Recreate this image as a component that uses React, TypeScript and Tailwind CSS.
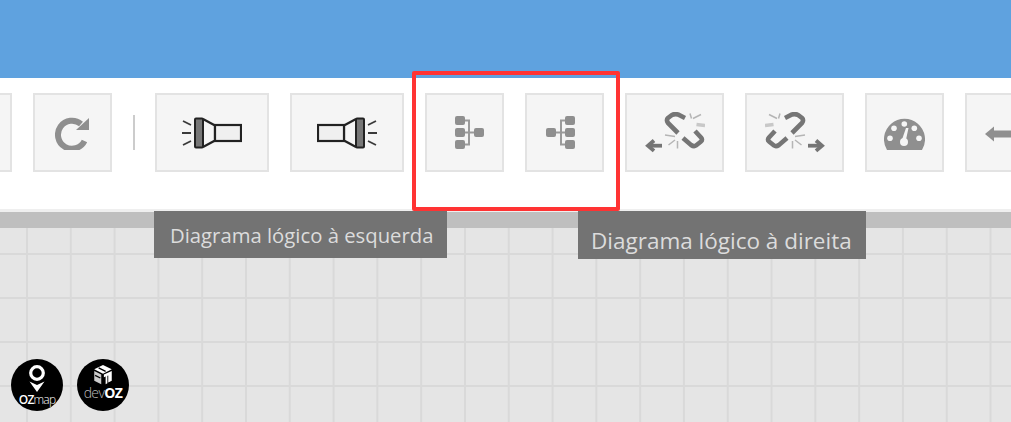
import React from 'react';

function ToolButton({ width, children }: { width: string; children?: React.ReactNode }) {
  return (
    <div className={`${width} h-[79px] shrink-0 flex items-center justify-center border-2 border-[#e3e3e3] bg-[#f5f5f5]`}>
      {children}
    </div>
  );
}

function Flashlight({ flip }: { flip?: boolean }) {
  return (
    <svg width="60" height="32" viewBox="0 0 60 32" fill="none" className="blur-[0.4px]">
      <g transform={flip ? 'translate(60 0) scale(-1 1)' : undefined}>
        <path d="M1 4l8 4M0 16h9M1 28l8-4" stroke="#3a3a3a" strokeWidth="1.8" />
        <rect x="13" y="1.500" width="8" height="29" rx="1" fill="#777" stroke="#222" strokeWidth="2" />
        <path d="M21 2l12 6.500v15L21 30" stroke="#222" strokeWidth="2.200" />
        <rect x="33" y="8" width="26" height="16" fill="#f0f0f0" stroke="#222" strokeWidth="2.200" />
      </g>
    </svg>
  );
}

function TreeIcon({ flip }: { flip?: boolean }) {
  return (
    <svg width="29" height="33" viewBox="0 0 29 33" fill="none" className={flip ? 'mr-[8px]' : 'ml-[10px]'}>
      <g transform={flip ? 'translate(29 0) scale(-1 1)' : undefined}>
        <path d="M8 4.500h6v24H8M8 16.500h12" stroke="#9a9a9a" strokeWidth="2" />
        <rect x="0" y="0" width="10" height="9" rx="2" fill="#8f8f8f" />
        <rect x="0" y="12" width="10" height="9" rx="2" fill="#8f8f8f" />
        <rect x="0" y="24" width="10" height="9" rx="2" fill="#8f8f8f" />
        <rect x="19" y="12" width="10" height="9" rx="2" fill="#8f8f8f" />
      </g>
    </svg>
  );
}

function BrokenLink({ flip }: { flip?: boolean }) {
  return (
    <svg width="60" height="41" viewBox="0 0 60 41" fill="none" className="blur-[0.5px]">
      <g transform={flip ? 'translate(60 0) scale(-1 1)' : undefined}>
        <path d="M40 6l-7-3.500q-3-1-6 .500l-4 3q-2 2 0 5l10 10" stroke="#757575" strokeWidth="4.600" />
        <path d="M38 26l8 7q3 2 5 .500l5-4q2-1.500 0-4l-6-6.500" stroke="#757575" strokeWidth="4.600" />
        <path d="M48 6.500l8-4M45 1.500l1.500 5M20 23l10 1.500M23.500 33l6.500-5M32.500 36.500V29" stroke="#b5b5b5" strokeWidth="1.500" />
        <path d="M51.500 12.500l8.500 1" stroke="#c8c8c8" strokeWidth="3.500" />
        <path d="M5 33.700h12" stroke="#757575" strokeWidth="3.800" />
        <path d="M9 28.500l-6 5.200 6 5.200" stroke="#757575" strokeWidth="3.800" />
      </g>
    </svg>
  );
}

function Gauge() {
  return (
    <svg width="41" height="32" viewBox="0 0 41 32" className="mt-[3px]">
      <path d="M3 32A20.500 20.500 0 1 1 38 32Z" fill="#8f8f8f" />
      <g fill="#f5f5f5">
        <circle cx="20.300" cy="6" r="2.800" />
        <circle cx="10" cy="10.300" r="2.800" />
        <circle cx="30.300" cy="10.300" r="2.800" />
        <circle cx="6" cy="20.300" r="2.800" />
        <circle cx="35" cy="20.300" r="2.800" />
        <circle cx="20" cy="24" r="4" />
        <path d="M17.500 23l4.500-13h2.500l-3 14z" />
      </g>
    </svg>
  );
}

function LogoBadge({ children }: { children: React.ReactNode }) {
  return (
    <div className="w-[52px] h-[52px] rounded-full bg-black text-white flex flex-col items-center justify-end font-['Open_Sans',sans-serif]">
      {children}
    </div>
  );
}

export default function App() {
  return (
    <div className="relative w-[1011px] h-[422px] overflow-hidden flex flex-col bg-white">
      <div className="h-[78px] shrink-0 bg-[#5fa2df]" />

      {/* Toolbar */}
      <div className="h-[134px] shrink-0 border-b-[3px] border-[#efefef] pt-[15px] overflow-hidden">
        <div className="flex items-start gap-[21px] ml-[-67px]">
          <ToolButton width="w-[79px]" />
          <ToolButton width="w-[79px]">
            <svg width="35" height="35" viewBox="0 0 35 35" fill="none">
              <path d="M26 9A14 14 0 1 0 29.500 26" stroke="#8f8f8f" strokeWidth="6" />
              <path d="M34 3v12H21z" fill="#8f8f8f" />
            </svg>
          </ToolButton>
          <div className="w-[2px] h-[35px] mt-[22px] mr-[-1px] bg-[#cccccc] shrink-0" />
          <ToolButton width="w-[114px]">
            <Flashlight />
          </ToolButton>
          <ToolButton width="w-[114px]">
            <Flashlight flip />
          </ToolButton>
          <ToolButton width="w-[79px]">
            <TreeIcon />
          </ToolButton>
          <ToolButton width="w-[79px]">
            <TreeIcon flip />
          </ToolButton>
          <ToolButton width="w-[99px]">
            <BrokenLink />
          </ToolButton>
          <ToolButton width="w-[99px]">
            <BrokenLink flip />
          </ToolButton>
          <ToolButton width="w-[79px]">
            <Gauge />
          </ToolButton>
          <ToolButton width="w-[79px]">
            <svg width="40" height="16" viewBox="0 0 40 16" fill="none" className="mt-[2px]">
              <path d="M7 8h33" stroke="#8f8f8f" strokeWidth="7" />
              <path d="M0 8l9-7.500v15z" fill="#8f8f8f" />
            </svg>
          </ToolButton>
        </div>
      </div>

      <div className="h-[16px] shrink-0 bg-[#bfbfbf]" />

      {/* Canvas */}
      <div className="flex-1 flex items-end gap-[14px] pl-[11px] pb-[11px] bg-[#e5e5e5] bg-[linear-gradient(to_right,#d9d9d9_2px,transparent_2px),linear-gradient(to_bottom,#d9d9d9_2px,transparent_2px)] bg-[size:43.8px_44px] bg-[position:26px_25px]">
        <LogoBadge>
          <svg width="18" height="27" viewBox="0 0 18 27" className="mb-[1px]">
            <circle cx="9" cy="8" r="6.300" fill="none" stroke="#fff" strokeWidth="3.200" />
            <path d="M1.500 16.500l7.500 3.500 7.500-3.500-7.500 10.500z" fill="#fff" />
          </svg>
          <div className="text-[12px] leading-[13px] tracking-[-0.8px] pb-[5px]">
            <span className="font-semibold">OZ</span>
            <span className="font-light">map</span>
          </div>
        </LogoBadge>
        <LogoBadge>
          <svg width="22" height="21" viewBox="0 0 22 24">
            <path d="M1 6l10-5 10 5-10 5z" fill="#fff" />
            <path d="M6 4.500l8 4" stroke="#000" strokeWidth="1.500" />
            <path d="M1 8l8 4v11l-8-4z" fill="#ccc" />
            <path d="M2 13l6 3" stroke="#000" strokeWidth="1.500" />
            <path d="M12 12l9-4v11l-4 2v-8l-5 2z" fill="#fff" />
            <path d="M14 14l2-1v9l-2 1z" fill="#fff" />
          </svg>
          <div className="text-[14px] leading-[16px] tracking-[-0.6px] pb-[10px]">
            <span className="font-light text-[#bbbbbb]">dev</span>
            <span className="font-bold">OZ</span>
          </div>
        </LogoBadge>
      </div>

      {/* Highlight */}
      <div className="absolute left-[412px] top-[71px] w-[208px] h-[140px] border-[4px] border-[#ff3333] rounded-[2px]" />

      {/* Tooltips */}
      <div className="absolute left-[154px] top-[211px] w-[293px] h-[47px] bg-[#737373] text-[#dcdcdc] pl-[16px] pt-[11px] text-[20.300px] leading-[26px] font-['Open_Sans',sans-serif] whitespace-nowrap">
        Diagrama lógico à esquerda
      </div>
      <div className="absolute left-[578px] top-[211px] w-[288px] h-[48px] bg-[#737373] text-[#dcdcdc] pl-[13px] pt-[17px] text-[22.500px] leading-[26px] font-['Open_Sans',sans-serif] whitespace-nowrap">
        Diagrama lógico à direita
      </div>
    </div>
  );
}
